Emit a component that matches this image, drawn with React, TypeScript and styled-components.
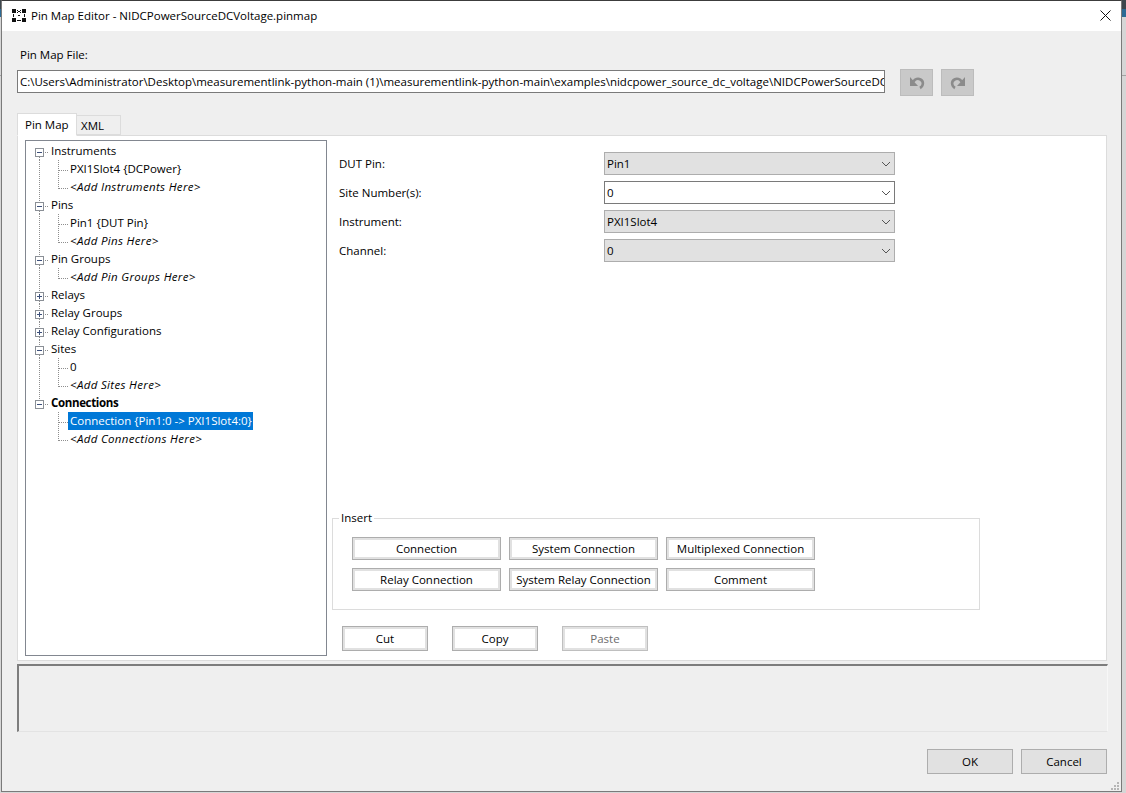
import React from "react";
import styled, { createGlobalStyle } from "styled-components";

const Global = createGlobalStyle`
  html, body { margin: 0; padding: 0; background: #d6d6d6; }
  body { font-family: "Open Sans", "Noto Sans", sans-serif; font-size: 11.5px; color: #000; overflow: hidden; }
`;
const Desktop = styled.div`
  width: 1126px; height: 793px; padding: 0 4px 0 1px; box-sizing: border-box; display: flex; align-items: flex-start;
  background: linear-gradient(#3d474d 0 9px, #2b6a94 9px 17px, #d6d6d6 17px 75px, #a3a3a3 75px 76px, #d6d6d6 76px);
`;
const Win = styled.div`
  width: 1121px; height: 792px; box-sizing: border-box; background: #efefef; flex: none;
  border: 1px solid #7a7a7a; border-top-color: #3c3c3c; display: flex; flex-direction: column;
`;
const TitleBar = styled.div`
  height: 28px; padding: 0 10px 2px 10px; background: #fff; display: flex; align-items: center; gap: 5px; flex: none;
`;
const TitleText = styled.span`flex: 1; font-size: 11.5px;`;
const Body = styled.div`
  flex: 1; display: flex; flex-direction: column; padding: 17px 13px 0 15px;
`;
const FileLabel = styled.div`height: 21px; padding-left: 3px; line-height: 14px;`;
const FileRow = styled.div`display: flex; align-items: flex-start; height: 27px; gap: 8px;`;
const PathBox = styled.div`
  width: 868px; height: 23px; box-sizing: border-box; border: 1px solid #7a7a7a; background: #fff;
  padding: 0 2px; line-height: 22px; white-space: nowrap; overflow: hidden; margin: 1px 7px 0 0;
`;
const IconBtn = styled.div`
  width: 33px; height: 27px; box-sizing: border-box; background: #c9c9c9; border: 1px solid #bcbcbc;
  display: flex; align-items: center; justify-content: center;
`;
const TabStrip = styled.div`display: flex; align-items: flex-end; height: 23px; margin-top: 16px; position: relative; z-index: 1;`;
const Tab = styled.div<{ $active?: boolean }>`
  box-sizing: border-box; border: 1px solid #dcdcdc; padding-left: ${p => (p.$active ? 7 : 4)}px;
  width: ${p => (p.$active ? 60 : 44)}px; height: ${p => (p.$active ? 23 : 20)}px;
  background: ${p => (p.$active ? "#fff" : "#efefef")};
  line-height: ${p => (p.$active ? 22 : 19)}px;
  ${p => (p.$active ? "border-bottom-color:#fff;margin-bottom:-1px;" : "border-left:none;")}
`;
const Panel = styled.div`
  width: 1090px; height: 526px; box-sizing: border-box; border: 1px solid #dcdcdc; background: #fff;
  display: flex; padding: 4px 0 0 7px;
`;
const Tree = styled.div`
  width: 302px; height: 516px; box-sizing: border-box; border: 1px solid #828790; background: #fff; padding-top: 1px; flex: none;
`;
const Row = styled.div`display: flex; height: 18px; align-items: center; white-space: nowrap;`;
const RowLabel = styled.span<{ $bold?: boolean; $italic?: boolean; $selected?: boolean }>`
  line-height: 18px; height: 18px; padding: 0 1px 0 2px; margin-left: -2px;
  font-weight: ${p => (p.$bold ? 700 : 400)};
  font-style: ${p => (p.$italic ? "italic" : "normal")};
  letter-spacing: ${p => (p.$italic ? "0.33px" : p.$bold ? "-0.35px" : "0")};
  background: ${p => (p.$selected ? "#0078d7" : "transparent")};
  color: ${p => (p.$selected ? "#fff" : "#000")};
`;
const Right = styled.div`flex: 1; display: flex; flex-direction: column; padding: 12px 0 0 5px;`;
const Form = styled.div`display: grid; grid-template-columns: 272px 291px; row-gap: 6px; height: 366px; align-content: start;`;
const FieldLabel = styled.label`padding-left: 7px; align-self: center;`;
const Combo = styled.div<{ $editable?: boolean }>`
  height: 23px; box-sizing: border-box; display: flex; align-items: center; justify-content: space-between;
  padding: 0 3px 0 2px;
  background: ${p => (p.$editable ? "#fff" : "#e1e1e1")};
  border: 1px solid ${p => (p.$editable ? "#7a7a7a" : "#adadad")};
`;
const Group = styled.fieldset`
  width: 648px; height: 99px; box-sizing: border-box; border: 1px solid #dcdcdc; margin: 0; padding: 11px 0 0 19px;
  display: grid; grid-template-columns: repeat(3, 149px); grid-auto-rows: 23px; column-gap: 8px; row-gap: 8px; align-content: start;
  margin-top: -7px;
`;
const Legend = styled.legend`padding: 0 2px 2px; margin-left: -13px; line-height: 13px; font-size: 11.5px;`;
const InsertBtn = styled.div`
  box-sizing: border-box; border: 1px solid #adadad; box-shadow: inset 0 0 0 2px #e1e1e1; background: #fff;
  display: flex; align-items: center; justify-content: center; white-space: nowrap;
`;
const EditRow = styled.div`display: flex; gap: 24px; margin-top: 16px; padding-left: 10px;`;
const EditBtn = styled.div<{ $disabled?: boolean }>`
  width: 86px; height: 25px; box-sizing: border-box; background: #fff;
  border: 1px solid ${p => (p.$disabled ? "#bfbfbf" : "#adadad")};
  box-shadow: inset 0 0 0 2px #e1e1e1;
  color: ${p => (p.$disabled ? "#6d6d6d" : "#000")};
  display: flex; align-items: center; justify-content: center;
`;
const Status = styled.div`
  width: 1091px; height: 68px; box-sizing: border-box; margin-top: 3px; flex: none;
  border-style: solid; border-width: 2px 1px 1px 2px; border-color: #7d7d7d #f7f7f7 #e3e3e3 #7d7d7d; background: #efefef;
`;
const Footer = styled.div`display: flex; justify-content: flex-end; gap: 8px; margin-top: 17px; padding-right: 1px;`;
const DlgBtn = styled.div`
  width: 86px; height: 25px; box-sizing: border-box; background: #e1e1e1; border: 1px solid #adadad;
  display: flex; align-items: center; justify-content: center;
`;
const GripRow = styled.div`display: flex; justify-content: flex-end; margin: auto -12px 0 0;`;

const Dot = "#8e8e8e";
const V = (x: number, y1: number, y2: number) => (
  <line x1={x + 0.5} x2={x + 0.5} y1={y1} y2={y2} stroke={Dot} strokeDasharray="1 1" />
);
const H = (y: number, x1: number, x2: number) => (
  <line y1={y + 0.5} y2={y + 0.5} x1={x1} x2={x2} stroke={Dot} strokeDasharray="1 1" />
);

function TopGlyph({ open, first, last }: { open?: boolean; first?: boolean; last?: boolean }) {
  return (
    <svg width="25" height="18" style={{ flex: "none" }}>
      {!first && V(13, 0, 6)}
      {!last && V(13, 15, 18)}
      {H(10, 19, 23)}
      <rect x="9.5" y="6.5" width="8" height="8" fill="#fff" stroke="#8a8f96" />
      <rect x="11" y="10" width="5" height="1" fill="#3c4f7a" />
      {!open && <rect x="13" y="8" width="1" height="5" fill="#3c4f7a" />}
    </svg>
  );
}
function ChildGlyph({ last, trunk }: { last?: boolean; trunk: boolean }) {
  return (
    <svg width="44" height="18" style={{ flex: "none" }}>
      {trunk && V(13, 0, 18)}
      {V(32, 0, last ? 11 : 18)}
      {H(10, 33, 42)}
    </svg>
  );
}

type Node = { label: string; open?: boolean; bold?: boolean; kids?: { label: string; italic?: boolean; selected?: boolean }[] };
const nodes: Node[] = [
  { label: "Instruments", open: true, kids: [{ label: "PXI1Slot4 {DCPower}" }, { label: "<Add Instruments Here>", italic: true }] },
  { label: "Pins", open: true, kids: [{ label: "Pin1 {DUT Pin}" }, { label: "<Add Pins Here>", italic: true }] },
  { label: "Pin Groups", open: true, kids: [{ label: "<Add Pin Groups Here>", italic: true }] },
  { label: "Relays" },
  { label: "Relay Groups" },
  { label: "Relay Configurations" },
  { label: "Sites", open: true, kids: [{ label: "0" }, { label: "<Add Sites Here>", italic: true }] },
  { label: "Connections", open: true, bold: true, kids: [{ label: "Connection {Pin1:0 -> PXI1Slot4:0}", selected: true }, { label: "<Add Connections Here>", italic: true }] },
];

const Chevron = () => (
  <svg width="10" height="6" viewBox="0 0 10 6"><path d="M1 1l4 4 4-4" fill="none" stroke="#555" /></svg>
);
const fields = [
  { label: "DUT Pin:", value: "Pin1" },
  { label: "Site Number(s):", value: "0", editable: true },
  { label: "Instrument:", value: "PXI1Slot4" },
  { label: "Channel:", value: "0" },
];
const inserts = ["Connection", "System Connection", "Multiplexed Connection", "Relay Connection", "System Relay Connection", "Comment"];

const AppIcon = () => (
  <svg width="14" height="13" viewBox="0 0 14 13" style={{ flex: "none" }}>
    <g fill="#111">
      <rect x="0" y="0" width="4" height="4" /><rect x="10" y="0" width="4" height="4" />
      <rect x="0" y="9" width="4" height="4" /><rect x="10" y="9" width="4" height="4" />
      <rect x="5" y="11" width="4" height="1" />
      <rect x="1" y="5" width="1" height="3" /><rect x="12" y="5" width="1" height="3" />
      <rect x="5" y="1" width="1" height="1" /><rect x="8" y="1" width="1" height="1" />
      <rect x="6" y="2" width="2" height="1" /><rect x="5" y="3" width="1" height="1" /><rect x="8" y="3" width="1" height="1" />
      <rect x="6" y="6" width="2" height="1" />
    </g>
  </svg>
);
const Undo = ({ flip }: { flip?: boolean }) => (
  <svg width="16" height="14" viewBox="0 0 16 14" style={flip ? { transform: "scaleX(-1)" } : undefined}>
    <path d="M1 1v9h8z" fill="#8b8b8b" />
    <path d="M4.500 5.500C6 3 9 2.200 11.500 3.500 15 5.500 14.500 10 11 12" fill="none" stroke="#8b8b8b" strokeWidth="2.600" />
  </svg>
);
const Grip = () => (
  <svg width="10" height="10" viewBox="0 0 10 10">
    <g fill="#b5b5b5">
      <rect x="7" y="1" width="2" height="2" /><rect x="4" y="4" width="2" height="2" /><rect x="7" y="4" width="2" height="2" />
      <rect x="1" y="7" width="2" height="2" /><rect x="4" y="7" width="2" height="2" /><rect x="7" y="7" width="2" height="2" />
    </g>
  </svg>
);
const Close = () => (
  <svg width="11" height="11" viewBox="0 0 11 11"><path d="M.5.5l10 10M10.500.5l-10 10" stroke="#111" strokeWidth="1" /></svg>
);

export default function App() {
  return (
    <Desktop>
      <Global />
      <Win>
        <TitleBar>
          <AppIcon />
          <TitleText>Pin Map Editor - NIDCPowerSourceDCVoltage.pinmap</TitleText>
          <Close />
        </TitleBar>
        <Body>
          <FileLabel>Pin Map File:</FileLabel>
          <FileRow>
            <PathBox>C:\Users\Administrator\Desktop\measurementlink-python-main (1)\measurementlink-python-main\examples\nidcpower_source_dc_voltage\NIDCPowerSourceDCVoltage.pinmap</PathBox>
            <IconBtn><Undo /></IconBtn>
            <IconBtn><Undo flip /></IconBtn>
          </FileRow>
          <TabStrip>
            <Tab $active>Pin Map</Tab>
            <Tab>XML</Tab>
          </TabStrip>
          <Panel>
            <Tree>
              {nodes.map((n, i) => (
                <React.Fragment key={n.label}>
                  <Row>
                    <TopGlyph open={n.open} first={i === 0} last={i === nodes.length - 1} />
                    <RowLabel $bold={n.bold}>{n.label}</RowLabel>
                  </Row>
                  {n.kids?.map((k, j) => (
                    <Row key={k.label}>
                      <ChildGlyph last={j === n.kids!.length - 1} trunk={i !== nodes.length - 1} />
                      <RowLabel $italic={k.italic} $selected={k.selected}>{k.label}</RowLabel>
                    </Row>
                  ))}
                </React.Fragment>
              ))}
            </Tree>
            <Right>
              <Form>
                {fields.map(f => (
                  <React.Fragment key={f.label}>
                    <FieldLabel>{f.label}</FieldLabel>
                    <Combo $editable={f.editable}>{f.value}<Chevron /></Combo>
                  </React.Fragment>
                ))}
              </Form>
              <Group>
                <Legend>Insert</Legend>
                {inserts.map(t => <InsertBtn key={t}>{t}</InsertBtn>)}
              </Group>
              <EditRow>
                <EditBtn>Cut</EditBtn>
                <EditBtn>Copy</EditBtn>
                <EditBtn $disabled>Paste</EditBtn>
              </EditRow>
            </Right>
          </Panel>
          <Status />
          <Footer>
            <DlgBtn>OK</DlgBtn>
            <DlgBtn>Cancel</DlgBtn>
          </Footer>
          <GripRow><Grip /></GripRow>
        </Body>
      </Win>
    </Desktop>
  );
}
